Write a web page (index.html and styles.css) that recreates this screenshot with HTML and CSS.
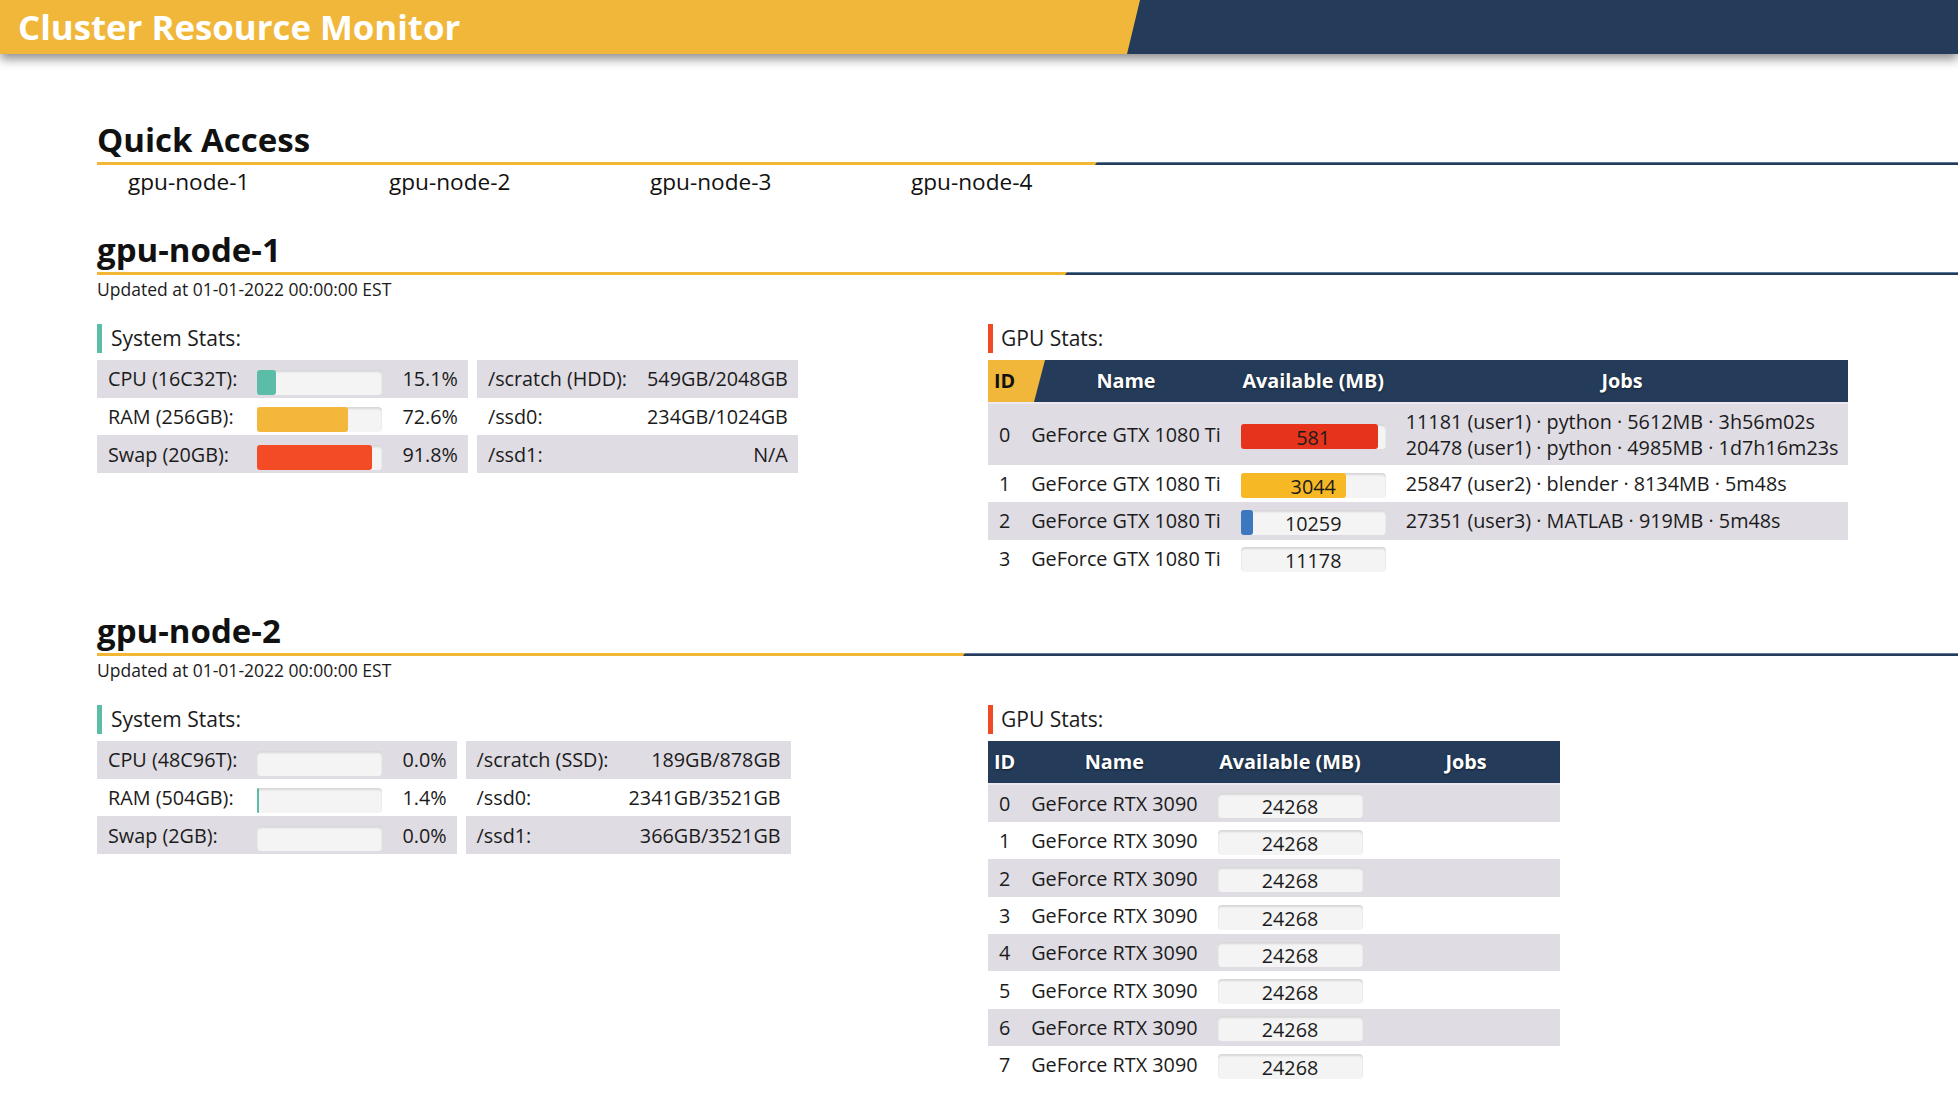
FILE: index.html
```html
<!DOCTYPE html>
<html lang="en">
<head>
<meta charset="utf-8">
<title>Cluster Resource Monitor</title>
<link rel="stylesheet" href="styles.css">
</head>
<body>
<header class="topbar">
  <div class="brand">Cluster Resource Monitor</div>
</header>

<main class="content">
  <section class="quick">
    <h2 class="sec-title">Quick Access</h2>
    <div class="rule"><div class="rule-fill" style="width:1000px"></div></div>
    <nav class="quick-links">
      <a href="#gpu-node-1">gpu-node-1</a>
      <a href="#gpu-node-2">gpu-node-2</a>
      <a href="#gpu-node-3">gpu-node-3</a>
      <a href="#gpu-node-4">gpu-node-4</a>
    </nav>
  </section>

  <section class="node" id="gpu-node-1">
    <h2 class="sec-title">gpu-node-1</h2>
    <div class="rule"><div class="rule-fill" style="width:970px"></div></div>
    <div class="updated">Updated at 01-01-2022 00:00:00 EST</div>
    <div class="node-grid">
      <div class="col">
        <div class="panel-title sys">System Stats:</div>
        <div class="stat-tables">
          <table class="stats">
            <tr><td class="lbl">CPU (16C32T):</td><td class="barcell"><div class="track"><div class="fill teal" style="width:15.1%"></div></div></td><td class="pct">15.1%</td></tr>
            <tr><td class="lbl">RAM (256GB):</td><td class="barcell"><div class="track"><div class="fill yellow" style="width:72.6%"></div></div></td><td class="pct">72.6%</td></tr>
            <tr><td class="lbl">Swap (20GB):</td><td class="barcell"><div class="track"><div class="fill red" style="width:91.8%"></div></div></td><td class="pct">91.8%</td></tr>
          </table>
          <table class="stats">
            <tr><td class="lbl">/scratch (HDD):</td><td class="val">549GB/2048GB</td></tr>
            <tr><td class="lbl">/ssd0:</td><td class="val">234GB/1024GB</td></tr>
            <tr><td class="lbl">/ssd1:</td><td class="val">N/A</td></tr>
          </table>
        </div>
      </div>
      <div class="col">
        <div class="panel-title gpu">GPU Stats:</div>
        <table class="gpus">
          <thead>
            <tr><th class="id busy">ID</th><th>Name</th><th>Available (MB)</th><th class="jobs">Jobs</th></tr>
          </thead>
          <tbody>
            <tr><td class="id">0</td><td class="name">GeForce GTX 1080 Ti</td><td class="avail"><div class="mem"><div class="mfill red" style="width:94.8%"></div><div class="num">581</div></div></td><td class="jobcell"><div>11181 (user1) · python · 5612MB · 3h56m02s</div><div>20478 (user1) · python · 4985MB · 1d7h16m23s</div></td></tr>
            <tr><td class="id">1</td><td class="name">GeForce GTX 1080 Ti</td><td class="avail"><div class="mem"><div class="mfill yellow" style="width:72.8%"></div><div class="num">3044</div></div></td><td class="jobcell"><div>25847 (user2) · blender · 8134MB · 5m48s</div></td></tr>
            <tr><td class="id">2</td><td class="name">GeForce GTX 1080 Ti</td><td class="avail"><div class="mem"><div class="mfill blue" style="width:8.2%"></div><div class="num">10259</div></div></td><td class="jobcell"><div>27351 (user3) · MATLAB · 919MB · 5m48s</div></td></tr>
            <tr><td class="id">3</td><td class="name">GeForce GTX 1080 Ti</td><td class="avail"><div class="mem"><div class="mfill" style="width:0%"></div><div class="num">11178</div></div></td><td class="jobcell"></td></tr>
          </tbody>
        </table>
      </div>
    </div>
  </section>

  <section class="node" id="gpu-node-2">
    <h2 class="sec-title">gpu-node-2</h2>
    <div class="rule"><div class="rule-fill" style="width:868px"></div></div>
    <div class="updated">Updated at 01-01-2022 00:00:00 EST</div>
    <div class="node-grid">
      <div class="col">
        <div class="panel-title sys">System Stats:</div>
        <div class="stat-tables">
          <table class="stats">
            <tr><td class="lbl">CPU (48C96T):</td><td class="barcell"><div class="track"><div class="fill teal" style="width:0%"></div></div></td><td class="pct">0.0%</td></tr>
            <tr><td class="lbl">RAM (504GB):</td><td class="barcell"><div class="track"><div class="fill teal" style="width:1.4%"></div></div></td><td class="pct">1.4%</td></tr>
            <tr><td class="lbl">Swap (2GB):</td><td class="barcell"><div class="track"><div class="fill teal" style="width:0%"></div></div></td><td class="pct">0.0%</td></tr>
          </table>
          <table class="stats">
            <tr><td class="lbl">/scratch (SSD):</td><td class="val">189GB/878GB</td></tr>
            <tr><td class="lbl">/ssd0:</td><td class="val">2341GB/3521GB</td></tr>
            <tr><td class="lbl">/ssd1:</td><td class="val">366GB/3521GB</td></tr>
          </table>
        </div>
      </div>
      <div class="col">
        <div class="panel-title gpu">GPU Stats:</div>
        <table class="gpus">
          <thead>
            <tr><th class="id">ID</th><th>Name</th><th>Available (MB)</th><th class="jobs">Jobs</th></tr>
          </thead>
          <tbody>
            <tr><td class="id">0</td><td class="name">GeForce RTX 3090</td><td class="avail"><div class="mem"><div class="mfill" style="width:0%"></div><div class="num">24268</div></div></td><td class="jobcell"></td></tr>
            <tr><td class="id">1</td><td class="name">GeForce RTX 3090</td><td class="avail"><div class="mem"><div class="mfill" style="width:0%"></div><div class="num">24268</div></div></td><td class="jobcell"></td></tr>
            <tr><td class="id">2</td><td class="name">GeForce RTX 3090</td><td class="avail"><div class="mem"><div class="mfill" style="width:0%"></div><div class="num">24268</div></div></td><td class="jobcell"></td></tr>
            <tr><td class="id">3</td><td class="name">GeForce RTX 3090</td><td class="avail"><div class="mem"><div class="mfill" style="width:0%"></div><div class="num">24268</div></div></td><td class="jobcell"></td></tr>
            <tr><td class="id">4</td><td class="name">GeForce RTX 3090</td><td class="avail"><div class="mem"><div class="mfill" style="width:0%"></div><div class="num">24268</div></div></td><td class="jobcell"></td></tr>
            <tr><td class="id">5</td><td class="name">GeForce RTX 3090</td><td class="avail"><div class="mem"><div class="mfill" style="width:0%"></div><div class="num">24268</div></div></td><td class="jobcell"></td></tr>
            <tr><td class="id">6</td><td class="name">GeForce RTX 3090</td><td class="avail"><div class="mem"><div class="mfill" style="width:0%"></div><div class="num">24268</div></div></td><td class="jobcell"></td></tr>
            <tr><td class="id">7</td><td class="name">GeForce RTX 3090</td><td class="avail"><div class="mem"><div class="mfill" style="width:0%"></div><div class="num">24268</div></div></td><td class="jobcell"></td></tr>
          </tbody>
        </table>
      </div>
    </div>
  </section>
</main>
</body>
</html>
```

FILE: styles.css
```css
html, body {
  margin: 0;
  padding: 0;
  background: #ffffff;
}

body {
  font-family: "Open Sans", "Noto Sans", "Liberation Sans", sans-serif;
  color: #1b1b1b;
  font-size: 19.8px;
}

.topbar {
  height: 54px;
  background: #243c5a;
  box-shadow: 0 5px 10px rgba(0, 0, 0, 0.45);
  position: relative;
  z-index: 1;
}

.brand {
  width: 1140px;
  height: 54px;
  box-sizing: border-box;
  padding-left: 18px;
  background: #f0b73b;
  clip-path: polygon(0 0, 100% 0, calc(100% - 13px) 100%, 0 100%);
  color: #ffffff;
  font-weight: 700;
  font-size: 34.8px;
  line-height: 54px;
  white-space: nowrap;
}

.content {
  padding: 0 0 12px 97px;
}

.sec-title {
  margin: 0;
  font-size: 33px;
  line-height: 38px;
  font-weight: 700;
  color: #111111;
  padding-bottom: 3px;
}

.quick .sec-title {
  margin-top: 67px;
}

.rule {
  height: 3px;
  background: linear-gradient(#5d7899 0 1px, #243c5a 1px);
}

.rule-fill {
  height: 3px;
  background: #f2b734;
  clip-path: polygon(0 0, 100% 0, calc(100% - 2px) 100%, 0 100%);
}

.quick-links {
  display: grid;
  grid-template-columns: repeat(4, 261px);
  padding-left: 31px;
  margin-top: 2px;
}

.quick-links a {
  font-size: 22.6px;
  line-height: 30px;
  color: #111111;
  text-decoration: none;
}

.node .sec-title {
  margin-top: 34px;
}

#gpu-node-2 .sec-title {
  margin-top: 35px;
}

.updated {
  font-size: 17.5px;
  line-height: 24px;
  margin-top: 2px;
  color: #1b1b1b;
}

.node-grid {
  display: grid;
  grid-template-columns: 891px auto;
  align-items: start;
  margin-top: 23px;
}

.panel-title {
  font-size: 21px;
  line-height: 29px;
  padding-left: 9px;
  border-left: 5px solid #5bbda7;
  margin-bottom: 7px;
}

.panel-title.gpu {
  border-left-color: #f04a25;
  padding-left: 8px;
}

.stat-tables {
  display: flex;
  gap: 9px;
  align-items: flex-start;
}

.stats {
  border-collapse: collapse;
  border-spacing: 0;
}

.stats tr {
  height: 37.67px;
}

.stats tr:nth-child(odd) td {
  background: #dfdce3;
}

.stats td {
  padding: 0 10px;
  white-space: nowrap;
  vertical-align: middle;
}

.stats td:first-child {
  padding-left: 11px;
}

.stats td.val,
.stats td.pct {
  text-align: right;
}

.stats td.barcell {
  vertical-align: bottom;
  padding-bottom: 3px;
}

.track {
  width: 125px;
  height: 25px;
  border-radius: 4px;
  background: #f4f4f4;
  box-shadow: inset 0 2px 2px rgba(0, 0, 0, 0.12);
  display: flex;
}

.fill {
  height: 100%;
  border-radius: 3px;
}

.teal { background: #5bbda7; }
.yellow { background: #f2b73b; }
.red { background: #f44b27; }

.gpus {
  border-collapse: separate;
  border-spacing: 0;
}

.gpus th {
  background: #243c5a;
  color: #ffffff;
  font-weight: 700;
  line-height: 42px;
  padding: 0 10px;
  border-bottom: 2px solid #eceaf0;
  text-shadow: 0 1px 2px rgba(0, 0, 0, 0.55);
  white-space: nowrap;
}

.gpus th.id {
  padding: 0 6px;
}

.gpus th.id.busy {
  position: relative;
  z-index: 0;
  color: #111111;
  text-shadow: none;
}

.gpus th.id.busy::before {
  content: "";
  position: absolute;
  left: 0;
  top: 0;
  width: 57px;
  height: 42px;
  background: #f0b73b;
  clip-path: polygon(0 0, 100% 0, calc(100% - 11px) 100%, 0 100%);
  z-index: -1;
}

.gpus th.jobs {
  width: 167px;
}

.gpus tbody tr {
  height: 37.3px;
}

.gpus tbody tr:nth-child(odd) td {
  background: #dfdce3;
}

.gpus td {
  padding: 4.5px 10px;
  vertical-align: middle;
  white-space: nowrap;
}

.gpus td.id {
  padding: 4.5px 6px;
  text-align: center;
}

.gpus td.jobcell {
  line-height: 26px;
}

.mem {
  display: inline-grid;
  vertical-align: middle;
  width: 145px;
  height: 25px;
  border-radius: 4px;
  background: #f4f4f4;
  box-shadow: inset 0 2px 2px rgba(0, 0, 0, 0.12);
}

.mfill {
  grid-area: 1 / 1;
  height: 25px;
  border-radius: 3px;
  justify-self: start;
}

.mfill.red { background: #e6341c; }
.mfill.yellow { background: #f7b825; }
.mfill.blue { background: #3b78c0; }

.num {
  grid-area: 1 / 1;
  line-height: 27px;
  height: 25px;
  text-align: center;
  color: #1b1b1b;
}
```
